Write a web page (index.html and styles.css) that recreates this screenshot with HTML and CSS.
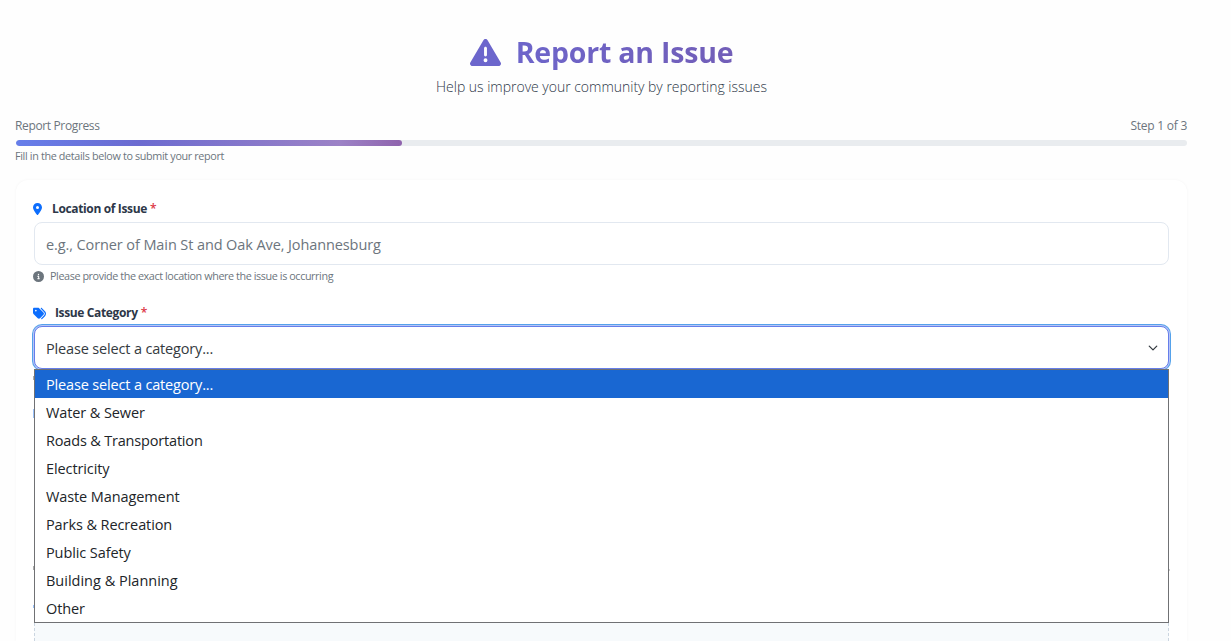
FILE: index.html
```html
<!DOCTYPE html>
<html lang="en">
<head>
<meta charset="utf-8">
<title>Report an Issue</title>
<link rel="stylesheet" href="styles.css">
</head>
<body>
<main class="page">
  <header class="hero">
    <h1 class="title">
      <svg class="title-icon" viewBox="0 0 512 512"><path fill="#6c66cc" d="M256 32c14.200 0 27.300 7.500 34.500 19.800l216 368c7.300 12.400 7.300 27.700 .2 40.100S486.300 480 472 480H40c-14.300 0-27.600-7.700-34.700-20.100s-7-27.800 .2-40.100l216-368C228.700 39.500 241.800 32 256 32zm0 128c-13.300 0-24 10.700-24 24V296c0 13.300 10.700 24 24 24s24-10.700 24-24V184c0-13.300-10.700-24-24-24zm32 224a32 32 0 1 0 -64 0 32 32 0 1 0 64 0z"/></svg>
      <span class="title-text">Report an Issue</span>
    </h1>
    <p class="subtitle">Help us improve your community by reporting issues</p>
  </header>

  <section class="progress">
    <div class="progress-head"><span class="progress-label">Report Progress</span><span class="progress-step">Step 1 of 3</span></div>
    <div class="track"><div class="bar"></div></div>
    <p class="progress-note">Fill in the details below to submit your report</p>
  </section>

  <form class="card">
    <div class="field">
      <label class="label">
        <svg class="pin" viewBox="0 0 384 512"><path fill="#0d6efd" d="M215.700 499.200C267 435 384 279.400 384 192C384 86 298 0 192 0S0 86 0 192c0 87.400 117 243 168.300 307.200c12.300 15.300 35.100 15.300 47.400 0zM192 128a64 64 0 1 1 0 128 64 64 0 1 1 0-128z"/></svg>
        <span class="label-text">Location of Issue</span><span class="req">*</span>
      </label>
      <div class="input">e.g., Corner of Main St and Oak Ave, Johannesburg</div>
      <p class="help">
        <svg class="info" viewBox="0 0 512 512"><path fill="#6c757d" d="M256 512A256 256 0 1 0 256 0a256 256 0 1 0 0 512zM216 336h24V272H216c-13.300 0-24-10.700-24-24s10.700-24 24-24h48c13.300 0 24 10.700 24 24v88h8c13.300 0 24 10.700 24 24s-10.700 24-24 24H216c-13.300 0-24-10.700-24-24s10.700-24 24-24zm40-208a32 32 0 1 1 0 64 32 32 0 1 1 0-64z"/></svg>
        <span class="help-text">Please provide the exact location where the issue is occurring</span>
      </p>
    </div>

    <div class="field">
      <label class="label">
        <svg class="tags" viewBox="0 0 512 512"><path fill="#0d6efd" d="M345 39.100L472.800 168.400c52.400 53 52.400 138.200 0 191.200L360.800 472.900c-9.300 9.400-24.500 9.500-33.900 .2s-9.500-24.500-.2-33.900L438.600 325.900c33.900-34.300 33.900-89.400 0-123.700L310.900 72.900c-9.300-9.400-9.200-24.600 .2-33.900s24.600-9.200 33.900 .2zM0 229.500V80C0 53.500 21.500 32 48 32H197.500c17 0 33.300 6.700 45.300 18.700l168 168c25 25 25 65.500 0 90.500L277.300 442.700c-25 25-65.500 25-90.500 0l-168-168C6.700 262.700 0 246.500 0 229.500zM144 144a32 32 0 1 0 -64 0 32 32 0 1 0 64 0z"/></svg>
        <span class="label-text">Issue Category</span><span class="req">*</span>
      </label>
      <div class="select">
        <span class="select-text">Please select a category...</span>
        <svg class="chevron" viewBox="0 0 16 16"><path fill="none" stroke="#343a40" stroke-linecap="round" stroke-linejoin="round" stroke-width="2" d="m2 5 6 6 6-6"/></svg>
        <ul class="menu">
          <li class="option selected">Please select a category...</li>
          <li class="option">Water &amp; Sewer</li>
          <li class="option tight">Roads &amp; Transportation</li>
          <li class="option">Electricity</li>
          <li class="option">Waste Management</li>
          <li class="option">Parks &amp; Recreation</li>
          <li class="option">Public Safety</li>
          <li class="option loose">Building &amp; Planning</li>
          <li class="option">Other</li>
        </ul>
      </div>
    </div>
    <div class="hidden-marks"><i class="mark"></i><i class="mark blue tall"></i><i class="mark low"></i><i class="mark blue last"></i><i class="mark right"></i></div>
    <div class="upload"></div>
  </form>
</main>
</body>
</html>
```
FILE: styles.css
```css
* { box-sizing: border-box; }
html, body { margin: 0; height: 641px; overflow: hidden; background: #fefefe; }
body { font-family: "Open Sans", "Noto Sans", sans-serif; color: #212529; }
p, h1, ul { margin: 0; padding: 0; }
svg { display: block; flex: none; }
span { white-space: nowrap; }

.page { width: 1203px; padding: 32px 16px 0; }
.hero { display: flex; flex-direction: column; align-items: center; height: 86px; }
.title { display: flex; align-items: center; gap: 15px; height: 40px; font-size: 28.500px; font-weight: 700; line-height: 40px; }
.title-icon { width: 31px; height: 31px; }
.title-text { color: transparent; background: linear-gradient(90deg, #6d65ca, #725eb8); background-clip: text; -webkit-background-clip: text; letter-spacing: -.2px; }
.subtitle { margin-top: 4px; font-size: 14px; font-weight: 300; line-height: 22px; color: #2d3748; white-space: nowrap; letter-spacing: -.02px; }

.progress { height: 62px; }
.progress-head { display: flex; justify-content: space-between; height: 22px; font-size: 12px; line-height: 16px; color: #6c757d; letter-spacing: -.25px; }
.progress-label { margin-left: -1px; letter-spacing: -.36px; }
.track { height: 6px; border-radius: 3px; background: #e9ecef; overflow: hidden; }
.bar { width: 386px; height: 6px; border-radius: 3px; background: linear-gradient(90deg, #667eea 0%, #6c6bd0 32%, #9c82c6 84%, #8f63ad 100%); }
.progress-note { margin: 2px 0 0 -1px; font-size: 10.800px; line-height: 16px; color: #6c757d; letter-spacing: -.35px; white-space: nowrap; }

.card { position: relative; height: 461px; padding: 20px 18px 0; border-radius: 12px 12px 0 0; background: #fff; box-shadow: 0 0 3px rgba(0,0,0,.045); }
.field { height: 104px; }
.label { display: flex; align-items: center; height: 18px; font-size: 12px; font-weight: 700; line-height: 18px; color: #2d3748; }
.pin { width: 9px; height: 12px; margin: 0 10px 0 -1px; }
.tags { width: 13px; height: 13px; margin: 0 9px 0 -1px; }
.label-text { letter-spacing: -.36px; }
.req { margin-left: 3px; color: #dc3545; font-weight: 600; }
.input { height: 43px; margin-top: 4px; padding: 1px 11px 0; border: 1px solid #e2e8f0; border-radius: 8px; background: #fff; font-size: 14.500px; line-height: 42px; color: #6c757d; letter-spacing: -.1px; }
.help { display: flex; align-items: center; height: 16px; margin-top: 3px; color: #6c757d; font-size: 10.800px; line-height: 16px; }
.info { width: 11px; height: 11px; margin: 0 6px 0 -1px; }
.help-text { letter-spacing: -.41px; }

.select { position: relative; display: flex; align-items: center; justify-content: space-between; height: 43px; margin-top: 4px; padding: 0 10px 0 11px; border: 1px solid #667eea; border-radius: 8px; background: #fff; box-shadow: 0 0 0 1px #b7c4f7, 0 0 0 2px #55a2eb; font-size: 14.500px; color: #343a40; letter-spacing: -.16px; }
.select-text { padding-top: 2px; }
.chevron { width: 10px; height: 10px; }
.menu { position: absolute; z-index: 2; top: 42px; left: -1px; width: 1135px; height: 254px; border: 1px solid #707174; background: #fff; list-style: none; }
.option { height: 28px; padding-left: 11px; font-size: 14.500px; line-height: 29px; color: #212529; letter-spacing: -.1px; }
.option.selected { background: #1967d2; color: #fff; letter-spacing: -.16px; }
.option.tight { letter-spacing: -.18px; }
.option.loose { letter-spacing: 0; }

.hidden-marks { position: absolute; left: 17px; top: 0; }
.mark { position: absolute; left: 0; top: 196px; width: 1px; height: 4px; background: #aaa; }
.mark.blue { background: #9cc2fa; }
.mark.tall { top: 229px; height: 9px; }
.mark.low { top: 386px; }
.mark.last { top: 425px; height: 3px; }
.mark.right { left: 1136px; top: 389px; height: 2px; background: #ccc; }
.upload { height: 48px; margin-top: 205px; border: 1px dashed #cbd5e0; border-bottom: 0; background: #f7fafc; }
```
